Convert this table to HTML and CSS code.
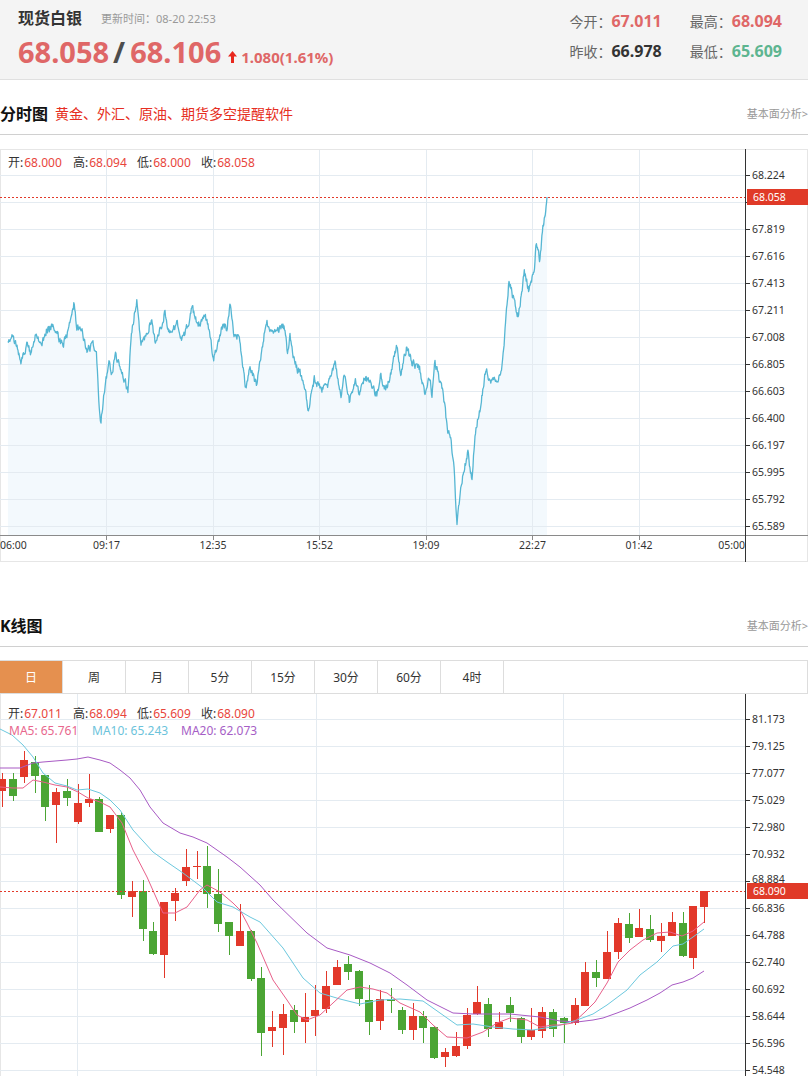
FILE: index.html
```html
<!DOCTYPE html>
<html lang="zh-CN">
<head>
<meta charset="utf-8">
<title>现货白银</title>
<link rel="stylesheet" href="styles.css">
</head>
<body>
<div class="page">
  <header class="quote-head">
    <div class="qh-left">
      <div class="qh-title-row"><h1 class="qh-title">现货白银</h1><span class="qh-time">更新时间：08-20 22:53</span></div>
      <div class="qh-price-row">
        <span class="price">68.058</span><span class="slash">/</span><span class="price">68.106</span>
        <svg class="arrow" viewBox="0 0 9 12"><polygon points="4.5,0 9,5.5 6,5.5 6,12 3,12 3,5.5 0,5.5" fill="#e8281e"/></svg>
        <span class="change">1.080(1.61%)</span>
      </div>
    </div>
    <div class="qh-right">
      <div class="stat"><span class="stat-l">今开：</span><span class="stat-v up">67.011</span></div>
      <div class="stat"><span class="stat-l">最高：</span><span class="stat-v up">68.094</span></div>
      <div class="stat"><span class="stat-l">昨收：</span><span class="stat-v flat">66.978</span></div>
      <div class="stat"><span class="stat-l">最低：</span><span class="stat-v down">65.609</span></div>
    </div>
  </header>

  <div class="sec-head">
    <div class="sec-title-wrap"><h2 class="sec-title">分时图</h2><a class="promo">黄金、外汇、原油、期货多空提醒软件</a></div>
    <a class="more">基本面分析&gt;</a>
  </div>

  <div class="chart intraday">
    <svg id="intraday" width="808" height="414" viewBox="0 149 808 414">
      <rect class="frame" x="0.5" y="149.5" width="807" height="412"/>
      <g id="i-fill"></g>
      <path class="grid" d="M0 175.5H745M0 202.5H745M0 229.5H745M0 256.5H745M0 283.5H745M0 310.5H745M0 337.5H745M0 364.5H745M0 391.5H745M0 418.5H745M0 445.5H745M0 472.5H745M0 499.5H745M0 526.5H745"/>
      <path class="grid" d="M106.5 150V535M213.5 150V535M319.5 150V535M426.5 150V535M532.5 150V535M639.5 150V535"/>
      <g id="i-line"></g>
      <path class="xaxis" d="M0 535.5H808M106.5 535V540M213.5 535V540M319.5 535V540M426.5 535V540M532.5 535V540M639.5 535V540"/>
      <path class="yaxis" d="M745.5 149V562M745 175.5h5M745 202.5h5M745 229.5h5M745 256.5h5M745 283.5h5M745 310.5h5M745 337.5h5M745 364.5h5M745 391.5h5M745 418.5h5M745 445.5h5M745 472.5h5M745 499.5h5M745 526.5h5"/>
      <g class="ax">
        <text x="752" y="179">68.224</text>
        <text x="752" y="233">67.819</text>
        <text x="752" y="260">67.616</text>
        <text x="752" y="287">67.413</text>
        <text x="752" y="314">67.211</text>
        <text x="752" y="341">67.008</text>
        <text x="752" y="368">66.805</text>
        <text x="752" y="395">66.603</text>
        <text x="752" y="422">66.400</text>
        <text x="752" y="449">66.197</text>
        <text x="752" y="476">65.995</text>
        <text x="752" y="503">65.792</text>
        <text x="752" y="530">65.589</text>
        <text x="0" y="549">06:00</text>
        <text x="106.5" y="549" text-anchor="middle">09:17</text>
        <text x="213" y="549" text-anchor="middle">12:35</text>
        <text x="319.5" y="549" text-anchor="middle">15:52</text>
        <text x="426" y="549" text-anchor="middle">19:09</text>
        <text x="532.5" y="549" text-anchor="middle">22:27</text>
        <text x="639" y="549" text-anchor="middle">01:42</text>
        <text x="745" y="549" text-anchor="end">05:00</text>
      </g>
      <path class="dotline" d="M0 197.5H745"/>
      <rect class="tag" x="747" y="189" width="61" height="16"/>
      <text class="tag-t" x="753" y="201">68.058</text>
      <g class="lg">
        <text x="8" y="167"><tspan class="lg-l">开:</tspan><tspan class="lg-v" dx="1">68.000</tspan></text>
        <text x="73" y="167"><tspan class="lg-l">高:</tspan><tspan class="lg-v" dx="1">68.094</tspan></text>
        <text x="137" y="167"><tspan class="lg-l">低:</tspan><tspan class="lg-v" dx="1">68.000</tspan></text>
        <text x="201" y="167"><tspan class="lg-l">收:</tspan><tspan class="lg-v" dx="1">68.058</tspan></text>
      </g>
    </svg>
  </div>

  <div class="sec-head k-head">
    <div class="sec-title-wrap"><h2 class="sec-title">K线图</h2></div>
    <a class="more">基本面分析&gt;</a>
  </div>

  <div class="tabs">
    <div class="tab active">日</div>
    <div class="tab">周</div>
    <div class="tab">月</div>
    <div class="tab">5分</div>
    <div class="tab">15分</div>
    <div class="tab">30分</div>
    <div class="tab">60分</div>
    <div class="tab">4时</div>
  </div>

  <div class="chart kline">
    <svg id="kline" width="808" height="400" viewBox="0 694 808 400">
      <path class="frame-l" d="M0.5 694V1094"/>
      <path class="grid" d="M0 719.5H745M0 746.5H745M0 773.5H745M0 800.5H745M0 827.5H745M0 854.5H745M0 881.5H745M0 908.5H745M0 935.5H745M0 962.5H745M0 989.5H745M0 1016.5H745M0 1043.5H745M0 1070.5H745"/>
      <path class="grid" d="M77.5 694V1094M316.5 694V1094M563.5 694V1094"/>
      <g id="k-candles"></g>
      <g id="k-ma"></g>
      <path class="yaxis" d="M745.5 694V1094M745 719.5h5M745 746.5h5M745 773.5h5M745 800.5h5M745 827.5h5M745 854.5h5M745 881.5h5M745 908.5h5M745 935.5h5M745 962.5h5M745 989.5h5M745 1016.5h5M745 1043.5h5M745 1070.5h5"/>
      <g class="ax">
        <text x="752" y="723">81.173</text>
        <text x="752" y="750">79.125</text>
        <text x="752" y="777">77.077</text>
        <text x="752" y="804">75.029</text>
        <text x="752" y="831">72.980</text>
        <text x="752" y="858">70.932</text>
        <text x="752" y="883" class="ax-peek">68.884</text>
        <text x="752" y="912">66.836</text>
        <text x="752" y="939">64.788</text>
        <text x="752" y="966">62.740</text>
        <text x="752" y="993">60.692</text>
        <text x="752" y="1020">58.644</text>
        <text x="752" y="1047">56.596</text>
        <text x="752" y="1074">54.548</text>
      </g>
      <path class="dotline" d="M0 891.5H745"/>
      <rect class="tag" x="747" y="883" width="61" height="16"/>
      <text class="tag-t" x="753" y="895">68.090</text>
      <g class="lg">
        <text x="8" y="718"><tspan class="lg-l">开:</tspan><tspan class="lg-v" dx="1">67.011</tspan></text>
        <text x="73" y="718"><tspan class="lg-l">高:</tspan><tspan class="lg-v" dx="1">68.094</tspan></text>
        <text x="137" y="718"><tspan class="lg-l">低:</tspan><tspan class="lg-v" dx="1">65.609</tspan></text>
        <text x="201" y="718"><tspan class="lg-l">收:</tspan><tspan class="lg-v" dx="1">68.090</tspan></text>
        <text x="9" y="735" class="ma5-t">MA5: 65.761</text>
        <text x="92" y="735" class="ma10-t">MA10: 65.243</text>
        <text x="181" y="735" class="ma20-t">MA20: 62.073</text>
      </g>
    </svg>
  </div>
</div>
<script src="chart.js"></script>
</body>
</html>
```

FILE: styles.css
```css
* { box-sizing: border-box; }
html, body { margin: 0; padding: 0; background: #fff; }
body {
  font-family: "Noto Sans", "Noto Sans CJK SC", sans-serif;
  color: #333;
}
.page { width: 808px; }

/* quote header */
.quote-head {
  height: 80px;
  background: #f4f4f4;
  border-bottom: 1px solid #e0e0e0;
  display: flex;
  justify-content: space-between;
}
.qh-left { padding-left: 18px; }
.qh-title-row { height: 36px; display: flex; align-items: center; }
.qh-title { margin: 0; font-size: 16px; font-weight: bold; color: #333; line-height: 22px; }
.qh-time { margin-left: 19px; font-size: 11px; color: #999; }
.qh-price-row { height: 32px; display: flex; align-items: baseline; line-height: 32px; }
.price { font-size: 29px; font-weight: bold; color: #df6767; }
.slash { font-size: 29px; font-weight: bold; color: #4d4d4d; margin: 0 5px 0 4px; }
.arrow { width: 9px; height: 12px; margin-left: 7px; margin-bottom: 2px; }
.change { font-size: 15px; font-weight: bold; color: #df6767; margin-left: 4px; }
.qh-right {
  display: grid;
  grid-template-columns: auto auto;
  column-gap: 28px;
  padding: 6px 26px 0 0;
  align-content: start;
}
.stat { height: 30px; display: flex; align-items: center; }
.stat-l { font-size: 14px; color: #666; }
.stat-v { font-size: 16px; font-weight: bold; }
.up { color: #df6767; }
.flat { color: #333; }
.down { color: #5db590; }

/* section heads */
.sec-head {
  height: 55px;
  padding-top: 23px;
  border-bottom: 1px solid #d0d0d0;
  display: flex;
  justify-content: space-between;
  align-items: flex-start;
}
.sec-title-wrap { display: flex; align-items: center; height: 22px; }
.sec-title { margin: 0; font-size: 16px; font-weight: bold; color: #111; line-height: 22px; }
.promo { margin-left: 7px; font-size: 14px; color: #e62e22; text-decoration: none; line-height: 22px; }
.more { font-size: 11px; color: #999; line-height: 22px; text-decoration: none; }
.k-head { margin-top: 29px; }

/* charts */
.chart { margin-top: 14px; }
.chart svg { display: block; }
.kline { margin-top: 0; }
.frame { fill: none; stroke: #e6e6e6; }
.frame-l { stroke: #e6e6e6; }
.grid { stroke: #e4ebf1; stroke-width: 1; fill: none; }
.xaxis { stroke: #8a8a8a; fill: none; }
.yaxis { stroke: #333; fill: none; }
.ax { font-family: "Noto Sans", sans-serif; font-size: 10.5px; fill: #333; }
.dotline { stroke: #e23a2a; stroke-dasharray: 2 2; fill: none; }
.tag { fill: #e03a28; }
.tag-t { font-family: "Noto Sans", sans-serif; font-size: 10.5px; fill: #fff; }
.lg { font-family: "Noto Sans", "Noto Sans CJK SC", sans-serif; font-size: 12px; }
.lg-l { fill: #333; }
.lg-v { fill: #e8453c; }
.ma5-t { fill: #e8678d; }
.ma10-t { fill: #6cc3db; }
.ma20-t { fill: #a65ec6; }
.i-area { fill: #f3f9fd; stroke: none; }
.i-line { fill: none; stroke: #55b6d3; stroke-width: 1.3; stroke-linejoin: round; }
.c-up { fill: #e2382a; }
.c-down { fill: #4ba534; }
.ma { fill: none; stroke-width: 1; stroke-linejoin: round; }
.ma5 { stroke: #e8608a; }
.ma10 { stroke: #6cc8de; }
.ma20 { stroke: #a85ac4; }

/* tabs */
.tabs {
  margin-top: 13px;
  height: 34px;
  border: 1px solid #ddd;
  border-left: none;
  display: flex;
}
.tab {
  width: 63px;
  border-right: 1px solid #ddd;
  display: flex;
  align-items: center;
  justify-content: center;
  font-size: 12px;
  color: #333;
}
.tab.active { background: #e5904f; color: #fff; }
```

FILE: chart.js
```js
(function () {
  var NS = 'http://www.w3.org/2000/svg';
  function el(tag, attrs, parent) {
    var e = document.createElementNS(NS, tag);
    for (var k in attrs) e.setAttribute(k, attrs[k]);
    parent.appendChild(e);
    return e;
  }
  var seed = 20240820;
  function rnd() { seed = (seed * 16807) % 2147483647; return (seed - 1) / 2147483646; }

  /* ---------- intraday line ---------- */
  var kp = [[7.9,342],[12.5,335],[16,343],[21.4,363],[26.8,343],[30.4,353],[35.7,333],[41,348],[46.4,330],[51.8,327],[57,333],[62.5,347],[67.9,333],[74.3,302],[76.8,327],[82,333],[87.5,350],[92.9,343],[96.4,353],[99.3,407],[101,423],[103.6,393],[109,363],[111.8,377],[115,353],[121.4,370],[127.9,390],[131.4,333],[136.8,300],[141,347],[146.4,337],[151.8,318],[155.4,343],[160.7,327],[165,313],[169.6,335],[176.8,323],[182,338],[187.5,327],[191.8,308],[198.2,323],[205.4,318],[209,330],[213.2,360],[217.9,347],[223.2,323],[226.8,327],[230.4,303],[234,340],[239.3,335],[245.7,388],[250,367],[256.4,385],[260.7,357],[266,320],[271.4,333],[276.8,330],[284,327],[287.5,352],[290,337],[294.6,363],[300,373],[305.4,393],[307.9,410],[314.3,380],[321.4,390],[328.6,383],[335,360],[341,397],[344.6,375],[349.3,402],[355.4,383],[359,393],[364.3,377],[369.6,382],[376.8,395],[380.4,377],[385.7,388],[391,373],[396.4,345],[400.7,375],[406.4,347],[412.5,363],[419.6,368],[425,393],[430.4,377],[432,397],[435,363],[442.9,390],[446.4,423],[450.7,440],[453.6,463],[457,520],[460.7,487],[463.6,473],[467.9,452],[472,482],[475,433],[480.4,407],[485.7,372],[492.9,382],[500,378],[503.6,353],[507,303],[509,280],[514.3,303],[518.6,317],[524.3,272],[528.6,290],[534,273],[536.4,243],[540,260],[542.9,227],[545.7,213],[547,197]];
  var pts = [];
  var n = 0;
  for (var i = 0; i < kp.length - 1; i++) {
    var a = kp[i], b = kp[i + 1];
    var steps = Math.max(1, Math.round((b[0] - a[0]) / 0.5));
    for (var j = 0; j < steps; j++) {
      var t = j / steps;
      var x = a[0] + (b[0] - a[0]) * t;
      var y = a[1] + (b[1] - a[1]) * t;
      n = n * 0.5 + (rnd() - 0.5) * 7;
      var yy = y + n;
      if (yy < 198) yy = 198;
      pts.push([x, yy]);
    }
  }
  pts.push([547, 197]);
  var d = '';
  for (var p = 0; p < pts.length; p++) {
    d += (p ? 'L' : 'M') + pts[p][0].toFixed(1) + ' ' + pts[p][1].toFixed(1);
  }
  el('path', { d: 'M7.9 535' + d.replace(/^M/, 'L') + 'L547 535Z', 'class': 'i-area' }, document.getElementById('i-fill'));
  el('path', { d: d, 'class': 'i-line' }, document.getElementById('i-line'));

  /* ---------- candles: [type, bodyTop, bodyBottom, wickTop, wickBottom] ---------- */
  var C = [
    ['r',779,791,773,807],['g',779,796,773,801],['r',760,777,751,783],['g',762,776,756,793],
    ['g',775,807,775,821],['r',792,805,788,843],['g',791,798,779,806],['r',803,822,784,824],
    ['r',799,803,774,807],['g',799,832,797,832],['r',815,829,815,833],['g',815,895,812,899],
    ['r',891,897,881,917],['g',891,929,880,941],['g',931,954,922,955],['r',902,955,902,978],
    ['r',893,901,888,921],['r',867,881,849,886],['r',866,867,851,879],['g',866,894,846,908],
    ['g',894,924,869,932],['g',922,936,922,955],['r',931,946,904,946],['g',931,979,930,981],
    ['g',978,1033,967,1056],['r',1027,1031,1011,1047],['r',1014,1028,1004,1055],['g',1010,1022,1005,1033],
    ['r',1017,1022,993,1043],['r',1010,1016,985,1036],['r',986,1009,971,1013],['r',967,985,960,985],
    ['g',964,972,956,980],['g',971,999,970,1006],['g',1000,1022,985,1035],['r',999,1021,990,1030],
    ['g',999,1001,988,1013],['g',1010,1030,1007,1034],['r',1016,1030,1003,1040],['g',1016,1028,1011,1043],
    ['g',1027,1058,1026,1059],['r',1052,1057,1048,1067],['r',1046,1056,1032,1057],['r',1015,1046,1008,1049],
    ['r',1002,1014,986,1015],['g',1004,1029,998,1037],['r',1022,1029,1012,1029],['g',1005,1013,997,1022],
    ['g',1018,1037,1017,1043],['r',1030,1037,1008,1040],['r',1012,1031,1007,1038],['g',1012,1029,1009,1037],
    ['g',1018,1023,1017,1043],['r',1005,1023,998,1025],['r',972,1006,962,1006],['g',972,978,960,987],
    ['r',952,979,931,979],['r',923,952,918,959],['g',924,938,913,943],['r',928,937,909,937],
    ['g',929,940,915,942],['r',936,941,923,952],['r',922,936,912,936],['g',923,956,912,957],
    ['r',906,958,906,969],['r',891,907,891,923]
  ];
  var cg = document.getElementById('k-candles');
  for (var c = 0; c < C.length; c++) {
    var k = C[c];
    var cx = 2.2 + 10.8 * c;
    var bx = Math.round(cx - 4);
    var cls = k[0] === 'r' ? 'c-up' : 'c-down';
    el('rect', { x: bx + 3.5, y: k[3], width: 1, height: Math.max(1, k[4] - k[3]), 'class': cls, 'shape-rendering': 'crispEdges' }, cg);
    el('rect', { x: bx, y: k[1], width: 8, height: Math.max(1, k[2] - k[1]), 'class': cls, 'shape-rendering': 'crispEdges' }, cg);
  }

  /* ---------- moving averages ---------- */
  var MA = {
    ma20: [[0,768],[20,768],[33,763],[43,762],[67,760],[77,759],[88,757],[100,760],[110,763],[120,770],[130,778],[140,790],[150,807],[163,823],[180,833],[193,837],[207,843],[227,857],[240,867],[260,885],[273,900],[307,933],[327,948],[350,955],[370,963],[390,973],[407,985],[427,1000],[453,1013],[473,1014],[510,1014],[540,1017],[560,1021],[577,1022],[593,1020],[603,1018],[617,1013],[630,1008],[647,1000],[660,993],[672,985],[683,982],[693,978],[704,971]],
    ma10: [[0,729],[12,735],[23,745],[33,757],[43,773],[55,783],[67,786],[77,790],[88,789],[100,793],[110,800],[120,810],[133,830],[153,852],[167,862],[183,873],[203,888],[217,902],[233,907],[250,917],[260,922],[283,948],[303,978],[320,993],[340,999],[360,1004],[380,1000],[400,999],[423,1001],[440,1013],[457,1025],[473,1024],[493,1027],[513,1029],[533,1030],[557,1026],[570,1022],[577,1020],[593,1014],[607,1005],[627,990],[640,975],[657,962],[673,946],[683,944],[693,937],[704,929]],
    ma5: [[0,787],[13,788],[23,788],[33,780],[43,782],[55,785],[67,787],[78,792],[88,798],[100,802],[110,807],[122,823],[133,850],[147,877],[163,913],[175,913],[187,907],[200,890],[207,885],[220,892],[233,903],[240,910],[247,923],[257,943],[273,980],[287,1000],[297,1015],[307,1020],[320,1015],[333,1003],[347,990],[360,987],[373,989],[387,993],[400,1003],[420,1012],[433,1025],[447,1037],[467,1038],[483,1032],[497,1023],[510,1018],[527,1020],[540,1027],[553,1025],[560,1025],[573,1023],[585,1012],[595,1002],[607,983],[618,962],[630,950],[643,940],[657,933],[670,932],[682,936],[693,931],[704,922]]
  };
  var mg = document.getElementById('k-ma');
  ['ma20', 'ma10', 'ma5'].forEach(function (name) {
    var s = MA[name].map(function (q) { return q[0] + ',' + q[1]; }).join(' ');
    el('polyline', { points: s, 'class': 'ma ' + name }, mg);
  });
})();
```
